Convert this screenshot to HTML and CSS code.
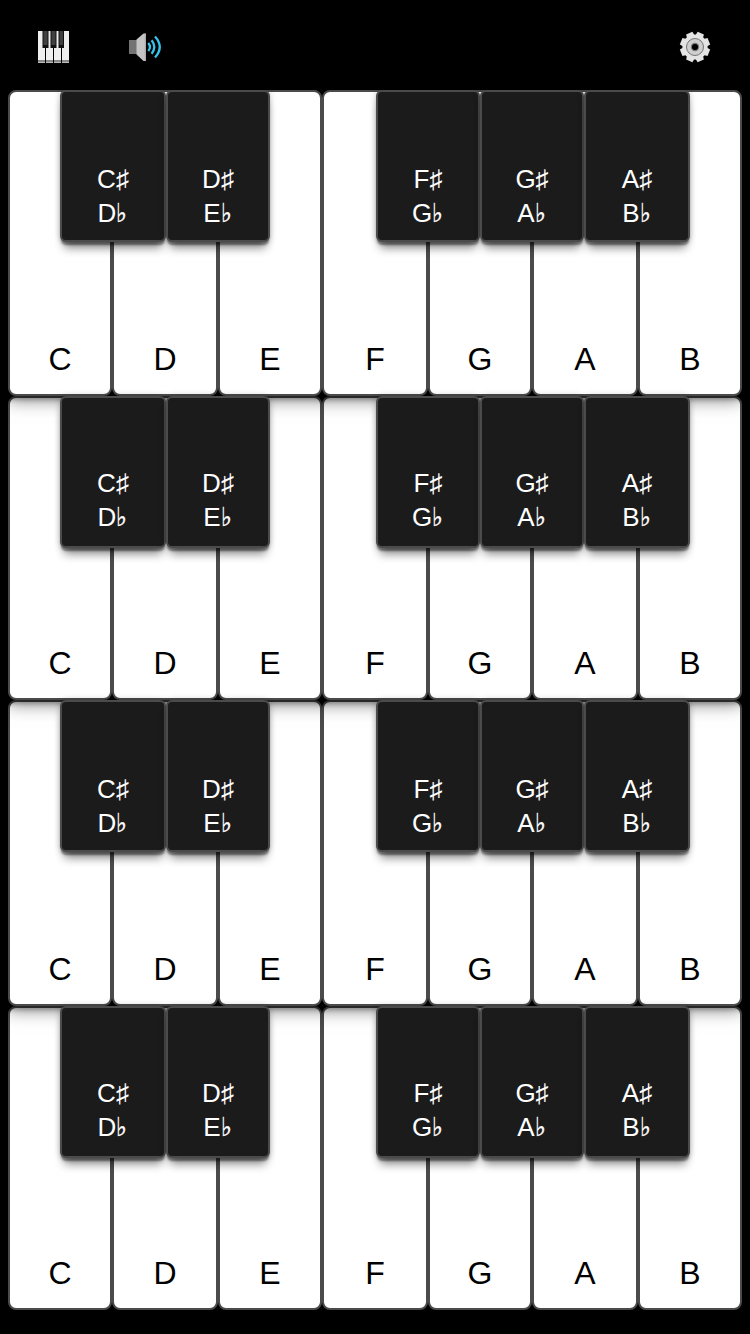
FILE: index.html
```
<!DOCTYPE html>
<html lang="en">
<head>
<meta charset="utf-8">
<title>Piano</title>
<link rel="stylesheet" href="styles.css">
</head>
<body>
<header class="toolbar">
  <div class="tools">
    <svg class="icon" width="50" height="50" viewBox="0 0 50 50" aria-label="Keyboard">
      <rect x="8" y="11" width="31" height="32" fill="#efefef"/>
      <path d="M8 40h31v2.500H8z" fill="#888"/>
      <path d="M15.500 11v32M23.500 11v32M31.500 11v32" stroke="#000" stroke-width="1"/>
      <path d="M12.500 11h6v17h-6zM20.500 11h6v17h-6zM28.500 11h5.500v17h-5.500z" fill="#111"/>
      <path d="M13.500 11h4v14h-4zM21.500 11h4v14h-4zM29.500 11h3.500v14h-3.500z" fill="#404040"/>
    </svg>
    <svg class="icon" width="50" height="50" viewBox="0 0 50 50" aria-label="Sound">
      <rect x="9" y="20" width="8" height="14" fill="#737373"/>
      <path d="M16.500 19.500 23.500 13.500H26V41h-2.500l-7-6.500z" fill="#c4c4c4"/>
      <path d="M25.300 13.500V41" stroke="#a5a5a5"/>
      <path d="M28.300 23Q31.600 27 28.300 31M31.600 20.300Q37 27 31.600 33.700M35 16.500Q44.500 27 35 37.500" fill="none" stroke="#37c3ea" stroke-width="2.300"/>
    </svg>
  </div>
  <svg class="icon" width="50" height="50" viewBox="0 0 50 50" aria-label="Settings">
    <g transform="translate(25 25)">
      <g id="teeth" fill="#e4e4e4"></g>
      <circle r="8.500" fill="#cfcfcf" stroke="#747474" stroke-width="1"/>
      <circle r="4.200" fill="#777"/>
      <circle r="3" fill="#000"/>
    </g>
  </svg>
</header>
<main class="keyboard" id="keyboard"></main>
<script src="piano.js"></script>
</body>
</html>
```
FILE: styles.css
```
body {
  margin: 0;
  background: #000;
  font-family: "Liberation Sans", Arial, sans-serif;
  height: 1334px;
  overflow: hidden;
}

.toolbar {
  display: flex;
  justify-content: space-between;
  height: 90px;
  padding: 20px 30px 0;
  box-sizing: border-box;
}

.tools {
  display: flex;
  gap: 40px;
}

.toolbar > .icon {
  margin-top: 2px;
}

.icon {
  display: block;
}

.keyboard {
  display: grid;
  grid-template-rows: 306px 304px 306px 304px;
  width: 734px;
  margin: 0 8px;
}

.octave {
  position: relative;
}

.naturals {
  position: relative;
  display: grid;
  grid-template-columns: 104px 106px 104px 106px 104px 106px 104px;
  height: 100%;
  box-shadow: 0 4px 4px rgba(0, 0, 0, .22), 0 4px 16px rgba(0, 0, 0, .5);
}

.octave:nth-child(1) .naturals { z-index: 4; }
.octave:nth-child(2) .naturals { z-index: 3; }
.octave:nth-child(3) .naturals { z-index: 2; }
.octave:nth-child(4) .naturals { z-index: 1; }

.natural,
.sharp {
  box-sizing: border-box;
  border: 2px solid #4b4b4b;
  text-align: center;
}

.natural {
  border-radius: 8px;
  background: #fff;
  color: #000;
  font-size: 32px;
  line-height: 36px;
  padding-top: 249px;
}

.sharps {
  position: absolute;
  top: 0;
  left: 52px;
  z-index: 10;
  display: grid;
  grid-template-columns: 106px 104px 106px 104px 104px 106px;
  height: 152px;
}

.sharp {
  border-radius: 6px;
  background: #1b1b1b;
  color: #fff;
  font-size: 26px;
  line-height: 34px;
  padding-top: 70px;
  box-shadow: 0 4px 2px -1px rgba(0, 0, 0, .4), 0 10px 10px -4px rgba(0, 0, 0, .45), 0 0 6px rgba(0, 0, 0, .25);
}

.flat {
  display: inline-block;
  margin: 0 1px 0 -1px;
  line-height: 1;
  transform: scaleX(.88);
  -webkit-text-stroke: .4px #fff;
}

.octave:nth-child(even) .natural { padding-top: 247px; }
.octave:nth-child(even) .sharp { padding-top: 68px; }
.sharp:nth-child(3) { grid-column: 4; }
```
FILE: piano.js
```
const naturals = ["C", "D", "E", "F", "G", "A", "B"];
const sharps = [["C♯", "D"], ["D♯", "E"], ["F♯", "G"], ["G♯", "A"], ["A♯", "B"]];

const octave = `<section class="octave">
  <div class="naturals">${naturals.map(n => `<div class="natural">${n}</div>`).join("")}</div>
  <div class="sharps">${sharps.map(([s, f]) => `<div class="sharp">${s}<br>${f}<span class="flat">♭</span></div>`).join("")}</div>
</section>`;
document.getElementById("keyboard").innerHTML = octave.repeat(4);

// Gear: a disc with eight teeth.
let gear = '<circle r="12.6"/>';
for (let a = 22.5; a < 360; a += 45) {
  gear += `<path transform="rotate(${a})" d="M-4-11-3.400-15h6.800L4-11z"/>`;
}
document.getElementById("teeth").innerHTML = gear;
```
